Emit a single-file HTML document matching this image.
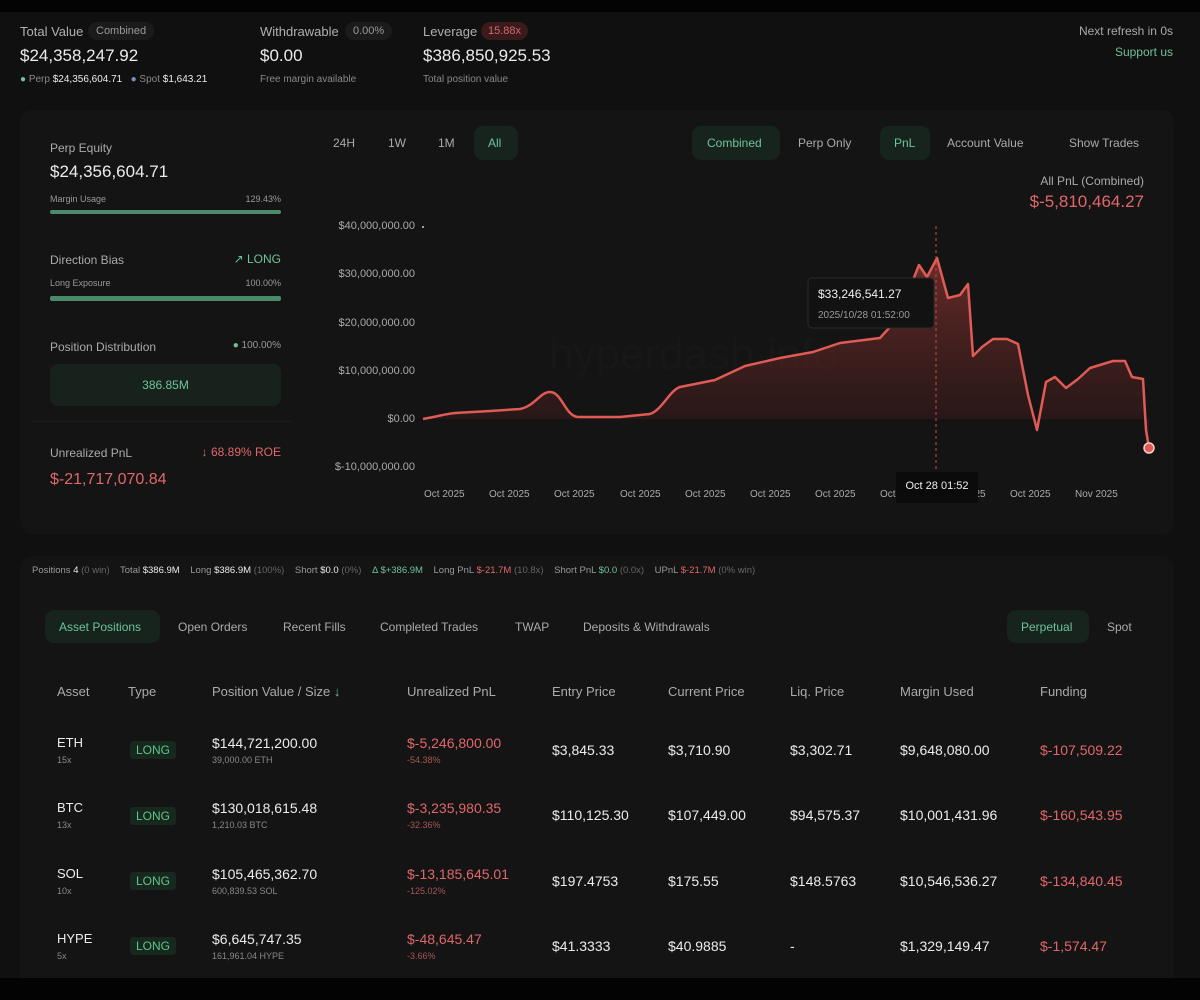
<!DOCTYPE html>
<html><head><meta charset="utf-8"><style>
*{margin:0;padding:0;box-sizing:border-box}
body{width:1200px;height:1000px;background:#101010;font-family:"Liberation Sans",sans-serif;color:#e8e8e8;position:relative;overflow:hidden}
.a{position:absolute;white-space:nowrap}
.g{color:#8a8a8a}.gr{color:#6fc29a}.r{color:#e0676a}.w{color:#ececec}
.pill{position:absolute;border-radius:9px;background:#16241d}
.lg{position:absolute;left:130px;width:46px;height:18px;background:#17291f;border-radius:3px;color:#5fc488;font-size:12px;text-align:center;line-height:18px}
</style></head><body>
<div class="a" style="left:0;top:0;width:1200px;height:12px;background:#030303"></div>
<div class="a" style="left:0;top:978px;width:1200px;height:22px;background:#030303"></div>

<!-- header -->
<div class="a g" style="left:20px;top:24px;font-size:13px;color:#b0b0b0">Total Value</div>
<div class="a" style="left:88px;top:22px;height:18px;padding:0 8px;background:#1b1b1b;border-radius:9px;font-size:11px;line-height:18px;color:#999">Combined</div>
<div class="a w" style="left:20px;top:46px;font-size:17px">$24,358,247.92</div>
<div class="a" style="left:20px;top:74px;font-size:10px;color:#888"><span class="gr">●</span> Perp <span class="w">$24,356,604.71</span> &nbsp; <span style="color:#7d8fc0">●</span> Spot <span class="w">$1,643.21</span></div>
<div class="a" style="left:260px;top:24px;font-size:13px;color:#b0b0b0">Withdrawable</div>
<div class="a" style="left:345px;top:22px;height:18px;padding:0 8px;background:#1b1b1b;border-radius:9px;font-size:11px;line-height:18px;color:#999">0.00%</div>
<div class="a w" style="left:260px;top:46px;font-size:17px">$0.00</div>
<div class="a" style="left:260px;top:74px;font-size:10px;color:#888">Free margin available</div>
<div class="a" style="left:423px;top:24px;font-size:13px;color:#b0b0b0">Leverage</div>
<div class="a" style="left:481px;top:22px;height:18px;padding:0 7px;background:#3a1a1b;border-radius:9px;font-size:11px;line-height:18px;color:#d06a6c">15.88x</div>
<div class="a w" style="left:423px;top:46px;font-size:17px">$386,850,925.53</div>
<div class="a" style="left:423px;top:74px;font-size:10px;color:#888">Total position value</div>
<div class="a" style="right:27px;top:24px;font-size:12px;color:#aaa">Next refresh in 0s</div>
<div class="a gr" style="right:27px;top:45px;font-size:12px">Support us</div>

<!-- top panel -->
<div class="a" style="left:20px;top:110px;width:1154px;height:424px;background:#141414;border-radius:12px"></div>
<div class="a" style="left:50px;top:141px;font-size:12px;color:#aaa">Perp Equity</div>
<div class="a w" style="left:50px;top:162px;font-size:17px">$24,356,604.71</div>
<div class="a" style="left:50px;top:194px;font-size:9px;color:#999">Margin Usage</div>
<div class="a" style="right:919px;top:194px;font-size:9px;color:#999">129.43%</div>
<div class="a" style="left:50px;top:210px;width:231px;height:4px;background:#4c8a6c;border-radius:2px"></div>
<div class="a" style="left:50px;top:253px;font-size:12px;color:#aaa">Direction Bias</div>
<div class="a gr" style="right:919px;top:252px;font-size:12px">↗ LONG</div>
<div class="a" style="left:50px;top:278px;font-size:9px;color:#999">Long Exposure</div>
<div class="a" style="right:919px;top:278px;font-size:9px;color:#999">100.00%</div>
<div class="a" style="left:50px;top:296px;width:231px;height:5px;background:#4a8a6a;border-radius:2px"></div>
<div class="a" style="left:50px;top:340px;font-size:12px;color:#aaa">Position Distribution</div>
<div class="a" style="right:919px;top:340px;font-size:10px;color:#999"><span class="gr">●</span> 100.00%</div>
<div class="a gr" style="left:50px;top:364px;width:231px;height:42px;background:#18221d;border-radius:8px;text-align:center;line-height:42px;font-size:12px">386.85M</div>
<div class="a" style="left:32px;top:421px;width:260px;height:1px;background:#1c1c1c"></div>
<div class="a" style="left:50px;top:446px;font-size:12px;color:#aaa">Unrealized PnL</div>
<div class="a r" style="right:919px;top:445px;font-size:12px">↓ 68.89% ROE</div>
<div class="a r" style="left:50px;top:471px;font-size:16px">$-21,717,070.84</div>

<!-- chart tabs -->
<div class="a" style="left:333px;top:136px;font-size:12px;color:#aaa">24H</div>
<div class="a" style="left:388px;top:136px;font-size:12px;color:#aaa">1W</div>
<div class="a" style="left:438px;top:136px;font-size:12px;color:#aaa">1M</div>
<div class="pill" style="left:474px;top:126px;width:44px;height:34px"></div>
<div class="a gr" style="left:488px;top:136px;font-size:12px">All</div>
<div class="pill" style="left:692px;top:126px;width:88px;height:34px"></div>
<div class="a gr" style="left:707px;top:136px;font-size:12px">Combined</div>
<div class="a" style="left:798px;top:136px;font-size:12px;color:#aaa">Perp Only</div>
<div class="pill" style="left:880px;top:126px;width:50px;height:34px"></div>
<div class="a gr" style="left:894px;top:136px;font-size:12px">PnL</div>
<div class="a" style="left:947px;top:136px;font-size:12px;color:#aaa">Account Value</div>
<div class="a" style="left:1069px;top:136px;font-size:12px;color:#aaa">Show Trades</div>
<div class="a" style="right:56px;top:174px;font-size:12px;color:#aaa">All PnL (Combined)</div>
<div class="a r" style="right:56px;top:192px;font-size:17px">$-5,810,464.27</div>

<!-- y axis -->
<div class="a" style="left:300px;width:115px;text-align:right;top:220px;font-size:11px;color:#aaa;line-height:12px">$40,000,000.00</div>
<div class="a" style="left:300px;width:115px;text-align:right;top:268px;font-size:11px;color:#aaa;line-height:12px">$30,000,000.00</div>
<div class="a" style="left:300px;width:115px;text-align:right;top:317px;font-size:11px;color:#aaa;line-height:12px">$20,000,000.00</div>
<div class="a" style="left:300px;width:115px;text-align:right;top:365px;font-size:11px;color:#aaa;line-height:12px">$10,000,000.00</div>
<div class="a" style="left:300px;width:115px;text-align:right;top:413px;font-size:11px;color:#aaa;line-height:12px">$0.00</div>
<div class="a" style="left:300px;width:115px;text-align:right;top:461px;font-size:11px;color:#aaa;line-height:12px">$-10,000,000.00</div>
<div class="a" style="left:549px;top:330px;font-size:44px;color:#171717">hyperdash.info</div>

<svg class="a" style="left:0;top:0" width="1200" height="540">
<defs><linearGradient id="f" x1="0" y1="0" x2="0" y2="1"><stop offset="0" stop-color="#b0403c" stop-opacity=".55"/><stop offset="1" stop-color="#5a1e1e" stop-opacity=".2"/></linearGradient></defs>
<circle cx="423" cy="227" r="1" fill="#ccc"/>
<path d="M423,419 L423,419 C440,416 445,414 455,413 L490,411 L520,409 C535,406 540,392 550,392 C562,392 565,416 578,417 L620,417 L650,414 C662,410 670,390 680,387 L715,380 L745,366 L780,358 L813,352 L840,343 L880,338 L890,327 L905,300 L919,265 L927,277 L937,258 L948,298 L960,295 L968,284 L973,356 L982,347 L993,339 L1007,339 L1018,344 L1028,395 L1037,430 L1046,382 L1055,377 L1066,388 L1078,379 L1090,368 L1113,361 L1125,361 L1132,377 L1143,379 L1146,430 L1149,448 L1149,419 Z" fill="url(#f)"/>
<path d="M423,419 C440,416 445,414 455,413 L490,411 L520,409 C535,406 540,392 550,392 C562,392 565,416 578,417 L620,417 L650,414 C662,410 670,390 680,387 L715,380 L745,366 L780,358 L813,352 L840,343 L880,338 L890,327 L905,300 L919,265 L927,277 L937,258 L948,298 L960,295 L968,284 L973,356 L982,347 L993,339 L1007,339 L1018,344 L1028,395 L1037,430 L1046,382 L1055,377 L1066,388 L1078,379 L1090,368 L1113,361 L1125,361 L1132,377 L1143,379 L1146,430 L1149,448" fill="none" stroke="#e05b55" stroke-width="2.5" stroke-linejoin="round"/>
<line x1="936" y1="226" x2="936" y2="472" stroke="#c0504c" stroke-dasharray="3,3"/>
<circle cx="1149" cy="448" r="5" fill="#e05b55" stroke="#f2d0d0" stroke-width="1.5"/>
<rect x="808" y="278" width="126" height="50" rx="4" fill="#121212" stroke="#2a2a2a"/>
<text x="818" y="298" font-family="Liberation Sans" font-size="12" fill="#eee">$33,246,541.27</text>
<text x="818" y="318" font-family="Liberation Sans" font-size="10" fill="#999">2025/10/28 01:52:00</text>
</svg>
<div class="a" style="left:424px;top:489px;font-size:10px;color:#aaa">Oct 2025</div>
<div class="a" style="left:489px;top:489px;font-size:10px;color:#aaa">Oct 2025</div>
<div class="a" style="left:554px;top:489px;font-size:10px;color:#aaa">Oct 2025</div>
<div class="a" style="left:620px;top:489px;font-size:10px;color:#aaa">Oct 2025</div>
<div class="a" style="left:685px;top:489px;font-size:10px;color:#aaa">Oct 2025</div>
<div class="a" style="left:750px;top:489px;font-size:10px;color:#aaa">Oct 2025</div>
<div class="a" style="left:815px;top:489px;font-size:10px;color:#aaa">Oct 2025</div>
<div class="a" style="left:880px;top:489px;font-size:10px;color:#aaa">Oct 2025</div>
<div class="a" style="left:945px;top:489px;font-size:10px;color:#aaa">Oct 2025</div>
<div class="a" style="left:1010px;top:489px;font-size:10px;color:#aaa">Oct 2025</div>
<div class="a" style="left:1075px;top:489px;font-size:10px;color:#aaa">Nov 2025</div>
<div class="a" style="left:896px;top:472px;width:82px;height:31px;background:#0b0b0b;color:#eee;font-size:11px;text-align:center;line-height:29px">Oct 28 01:52</div>

<!-- bottom panel -->
<div class="a" style="left:20px;top:556px;width:1154px;height:422px;background:#141414;border-radius:12px 12px 0 0"></div>
<div class="a" style="left:32px;top:565px;font-size:9.5px;color:#999">Positions <span class="w">4</span> <span style="color:#666">(0 win)</span> &nbsp;&nbsp; Total <span class="w">$386.9M</span> &nbsp;&nbsp; Long <span class="w">$386.9M</span> <span style="color:#666">(100%)</span> &nbsp;&nbsp; Short <span class="w">$0.0</span> <span style="color:#666">(0%)</span> &nbsp;&nbsp; <span class="gr">Δ $+386.9M</span> &nbsp;&nbsp; Long PnL <span class="r">$-21.7M</span> <span style="color:#666">(10.8x)</span> &nbsp;&nbsp; Short PnL <span class="gr">$0.0</span> <span style="color:#666">(0.0x)</span> &nbsp;&nbsp; UPnL <span class="r">$-21.7M</span> <span style="color:#666">(0% win)</span></div>
<div class="pill" style="left:45px;top:610px;width:115px;height:33px"></div>
<div class="a gr" style="left:59px;top:620px;font-size:12px">Asset Positions</div>
<div class="a" style="left:178px;top:620px;font-size:12px;color:#aaa">Open Orders</div>
<div class="a" style="left:283px;top:620px;font-size:12px;color:#aaa">Recent Fills</div>
<div class="a" style="left:380px;top:620px;font-size:12px;color:#aaa">Completed Trades</div>
<div class="a" style="left:515px;top:620px;font-size:12px;color:#aaa">TWAP</div>
<div class="a" style="left:583px;top:620px;font-size:12px;color:#aaa">Deposits &amp; Withdrawals</div>
<div class="pill" style="left:1007px;top:610px;width:82px;height:33px"></div>
<div class="a gr" style="left:1021px;top:620px;font-size:12px">Perpetual</div>
<div class="a" style="left:1107px;top:620px;font-size:12px;color:#aaa">Spot</div>

<div class="a" style="left:0;top:684px;font-size:13px;color:#aaa;width:1200px">
<span class="a" style="left:57px">Asset</span><span class="a" style="left:128px">Type</span><span class="a" style="left:212px">Position Value / Size <span class="gr">↓</span></span><span class="a" style="left:407px">Unrealized PnL</span><span class="a" style="left:552px">Entry Price</span><span class="a" style="left:668px">Current Price</span><span class="a" style="left:790px">Liq. Price</span><span class="a" style="left:900px">Margin Used</span><span class="a" style="left:1040px">Funding</span></div>

<!-- rows -->
<div class="a w" style="left:57px;top:735px;font-size:13px">ETH</div><div class="a" style="left:57px;top:755px;font-size:9px;color:#888">15x</div>
<div class="lg" style="top:741px">LONG</div>
<div class="a w" style="left:212px;top:735px;font-size:14px">$144,721,200.00</div><div class="a" style="left:212px;top:755px;font-size:9px;color:#888">39,000.00 ETH</div>
<div class="a r" style="left:407px;top:735px;font-size:14px">$-5,246,800.00</div><div class="a" style="left:407px;top:755px;font-size:9px;color:#a55">-54.38%</div>
<div class="a w" style="left:552px;top:742px;font-size:14px">$3,845.33</div><div class="a w" style="left:668px;top:742px;font-size:14px">$3,710.90</div><div class="a w" style="left:790px;top:742px;font-size:14px">$3,302.71</div><div class="a w" style="left:900px;top:742px;font-size:14px">$9,648,080.00</div><div class="a r" style="left:1040px;top:742px;font-size:14px">$-107,509.22</div>

<div class="a w" style="left:57px;top:800px;font-size:13px">BTC</div><div class="a" style="left:57px;top:820px;font-size:9px;color:#888">13x</div>
<div class="lg" style="top:807px">LONG</div>
<div class="a w" style="left:212px;top:800px;font-size:14px">$130,018,615.48</div><div class="a" style="left:212px;top:820px;font-size:9px;color:#888">1,210.03 BTC</div>
<div class="a r" style="left:407px;top:800px;font-size:14px">$-3,235,980.35</div><div class="a" style="left:407px;top:820px;font-size:9px;color:#a55">-32.36%</div>
<div class="a w" style="left:552px;top:807px;font-size:14px">$110,125.30</div><div class="a w" style="left:668px;top:807px;font-size:14px">$107,449.00</div><div class="a w" style="left:790px;top:807px;font-size:14px">$94,575.37</div><div class="a w" style="left:900px;top:807px;font-size:14px">$10,001,431.96</div><div class="a r" style="left:1040px;top:807px;font-size:14px">$-160,543.95</div>

<div class="a w" style="left:57px;top:866px;font-size:13px">SOL</div><div class="a" style="left:57px;top:886px;font-size:9px;color:#888">10x</div>
<div class="lg" style="top:872px">LONG</div>
<div class="a w" style="left:212px;top:866px;font-size:14px">$105,465,362.70</div><div class="a" style="left:212px;top:886px;font-size:9px;color:#888">600,839.53 SOL</div>
<div class="a r" style="left:407px;top:866px;font-size:14px">$-13,185,645.01</div><div class="a" style="left:407px;top:886px;font-size:9px;color:#a55">-125.02%</div>
<div class="a w" style="left:552px;top:873px;font-size:14px">$197.4753</div><div class="a w" style="left:668px;top:873px;font-size:14px">$175.55</div><div class="a w" style="left:790px;top:873px;font-size:14px">$148.5763</div><div class="a w" style="left:900px;top:873px;font-size:14px">$10,546,536.27</div><div class="a r" style="left:1040px;top:873px;font-size:14px">$-134,840.45</div>

<div class="a w" style="left:57px;top:931px;font-size:13px">HYPE</div><div class="a" style="left:57px;top:951px;font-size:9px;color:#888">5x</div>
<div class="lg" style="top:937px">LONG</div>
<div class="a w" style="left:212px;top:931px;font-size:14px">$6,645,747.35</div><div class="a" style="left:212px;top:951px;font-size:9px;color:#888">161,961.04 HYPE</div>
<div class="a r" style="left:407px;top:931px;font-size:14px">$-48,645.47</div><div class="a" style="left:407px;top:951px;font-size:9px;color:#a55">-3.66%</div>
<div class="a w" style="left:552px;top:938px;font-size:14px">$41.3333</div><div class="a w" style="left:668px;top:938px;font-size:14px">$40.9885</div><div class="a w" style="left:790px;top:938px;font-size:14px">-</div><div class="a w" style="left:900px;top:938px;font-size:14px">$1,329,149.47</div><div class="a r" style="left:1040px;top:938px;font-size:14px">$-1,574.47</div>
</body></html>
